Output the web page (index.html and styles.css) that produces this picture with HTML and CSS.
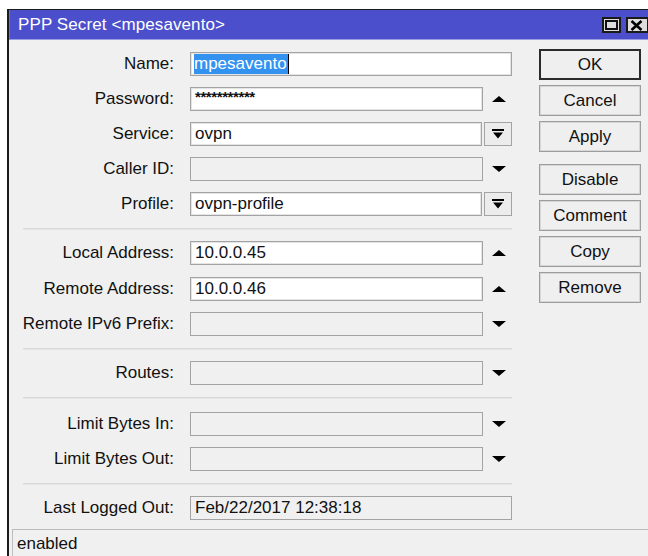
FILE: index.html
```html
<!DOCTYPE html>
<html lang="en">
<head>
<meta charset="utf-8">
<title>PPP Secret</title>
<link rel="stylesheet" href="styles.css">
</head>
<body>
<div class="window">
  <div class="titlebar">
    <span class="title">PPP Secret &lt;mpesavento&gt;</span>
    <div class="tb-buttons">
      <span class="tb-btn"><span class="max-icon"></span></span>
      <span class="tb-btn close">
        <svg width="13" height="11" viewBox="0 0 13 11"><path d="M1.5 1 L11.5 10 M11.5 1 L1.5 10" stroke="#000" stroke-width="2.6"/></svg>
      </span>
    </div>
  </div>

  <div class="body">
    <div class="form">
      <div class="group tight">
        <div class="row">
          <label>Name:</label>
          <div class="ctl"><div class="field"><span class="sel">mpesavento</span><span class="caret"></span></div></div>
        </div>
        <div class="row">
          <label>Password:</label>
          <div class="ctl"><div class="field"><span class="stars">***********</span></div><span class="arrow"><svg width="14" height="6" viewBox="0 0 14 6"><polygon points="0,6 14,6 7,0"/></svg></span></div>
        </div>
        <div class="row">
          <label>Service:</label>
          <div class="ctl"><div class="field">ovpn</div><span class="drop"><svg width="12" height="10" viewBox="0 0 12 10"><rect x="0" y="0" width="12" height="2"/><polygon points="1,3.5 11,3.5 6,9.5"/></svg></span></div>
        </div>
        <div class="row">
          <label>Caller ID:</label>
          <div class="ctl"><div class="field off"></div><span class="arrow"><svg width="14" height="6" viewBox="0 0 14 6"><polygon points="0,0 14,0 7,6"/></svg></span></div>
        </div>
        <div class="row">
          <label>Profile:</label>
          <div class="ctl"><div class="field">ovpn-profile</div><span class="drop"><svg width="12" height="10" viewBox="0 0 12 10"><rect x="0" y="0" width="12" height="2"/><polygon points="1,3.5 11,3.5 6,9.5"/></svg></span></div>
        </div>
      </div>

      <hr class="sep">

      <div class="group">
        <div class="row">
          <label>Local Address:</label>
          <div class="ctl"><div class="field">10.0.0.45</div><span class="arrow"><svg width="14" height="6" viewBox="0 0 14 6"><polygon points="0,6 14,6 7,0"/></svg></span></div>
        </div>
        <div class="row">
          <label>Remote Address:</label>
          <div class="ctl"><div class="field">10.0.0.46</div><span class="arrow"><svg width="14" height="6" viewBox="0 0 14 6"><polygon points="0,6 14,6 7,0"/></svg></span></div>
        </div>
        <div class="row">
          <label>Remote IPv6 Prefix:</label>
          <div class="ctl"><div class="field off"></div><span class="arrow"><svg width="14" height="6" viewBox="0 0 14 6"><polygon points="0,0 14,0 7,6"/></svg></span></div>
        </div>
      </div>

      <hr class="sep">

      <div class="group">
        <div class="row">
          <label>Routes:</label>
          <div class="ctl"><div class="field off"></div><span class="arrow"><svg width="14" height="6" viewBox="0 0 14 6"><polygon points="0,0 14,0 7,6"/></svg></span></div>
        </div>
      </div>

      <hr class="sep loose">

      <div class="group">
        <div class="row">
          <label>Limit Bytes In:</label>
          <div class="ctl"><div class="field off"></div><span class="arrow"><svg width="14" height="6" viewBox="0 0 14 6"><polygon points="0,0 14,0 7,6"/></svg></span></div>
        </div>
        <div class="row">
          <label>Limit Bytes Out:</label>
          <div class="ctl"><div class="field off"></div><span class="arrow"><svg width="14" height="6" viewBox="0 0 14 6"><polygon points="0,0 14,0 7,6"/></svg></span></div>
        </div>
      </div>

      <hr class="sep">

      <div class="group">
        <div class="row">
          <label>Last Logged Out:</label>
          <div class="ctl"><div class="field off">Feb/22/2017 12:38:18</div></div>
        </div>
      </div>
    </div>

    <div class="actions">
      <button class="btn default">OK</button>
      <button class="btn">Cancel</button>
      <button class="btn">Apply</button>
      <button class="btn gap">Disable</button>
      <button class="btn">Comment</button>
      <button class="btn">Copy</button>
      <button class="btn">Remove</button>
    </div>
  </div>

  <div class="status">enabled</div>
</div>
</body>
</html>
```

FILE: styles.css
```css
html, body {
  margin: 0;
  padding: 0;
  background: #ffffff;
  overflow: hidden;
  height: 556px;
}

body {
  font-family: "Liberation Sans", Arial, sans-serif;
  font-size: 17px;
  color: #111;
}

/* window frame */
.window {
  margin: 9px 0 0 7px;
  width: 643px;
  height: 547px;
  border-left: 2px solid #1c1c1c;
  border-top: 1px solid #1c1c1c;
  background: #f0f0f0;
  box-sizing: border-box;
  display: flex;
  flex-direction: column;
}

.titlebar {
  height: 30px;
  background: #4b4fcc;
  border-left: 1px solid #6a6ed6;
  border-bottom: 1px solid #9a9de2;
  box-sizing: border-box;
  display: flex;
  align-items: center;
  justify-content: space-between;
  padding: 0 1px 0 8px;
  flex: none;
}

.title {
  color: #ffffff;
  font-size: 17px;
  letter-spacing: 0.1px;
}

.tb-buttons {
  display: flex;
  gap: 5px;
  align-self: flex-start;
  margin-top: 7px;
}

.tb-btn {
  width: 19px;
  height: 16px;
  box-sizing: border-box;
  border: 2px solid #1a1a1a;
  background: #dedede;
  display: flex;
  align-items: center;
  justify-content: center;
}

.tb-btn.close {
  width: 23px;
  justify-content: flex-start;
  padding-left: 2px;
}

.max-icon {
  width: 13px;
  height: 10px;
  box-sizing: border-box;
  border: 2px solid #111;
}

/* form area */
.body {
  display: flex;
  align-items: flex-start;
  padding-top: 9px;
  flex: none;
}

.form {
  display: flex;
  flex-direction: column;
  padding-top: 3px;
}

.group {
  display: flex;
  flex-direction: column;
  gap: 11.5px;
}

.group.tight {
  gap: 11px;
}

.row {
  display: grid;
  grid-template-columns: 165px 322px;
  column-gap: 16px;
  align-items: center;
}

.row label {
  text-align: right;
  white-space: nowrap;
  line-height: 24px;
}

.ctl {
  display: flex;
  align-items: center;
  height: 24px;
}

.field {
  flex: 1;
  height: 24px;
  box-sizing: border-box;
  border: 1px solid #a3a3a3;
  box-shadow: inset 0 0 0 1px #e4e4e4;
  background: #ffffff;
  padding: 0 4px;
  line-height: 22px;
  white-space: nowrap;
  overflow: hidden;
  display: flex;
  align-items: center;
}

.field.off {
  background: #f0f0f0;
  box-shadow: none;
}

.sel {
  background: #3391f0;
  color: #ffffff;
  line-height: 20px;
  padding: 0 1px 0 0;
  margin-left: -1px;
}

.caret {
  width: 1px;
  height: 20px;
  background: #000;
}

.stars {
  font-size: 15px;
  line-height: 15px;
  align-self: flex-start;
  margin-top: 1px;
  font-weight: bold;
  letter-spacing: -0.4px;
}

.arrow {
  width: 29px;
  flex: none;
  display: flex;
  justify-content: center;
  padding-left: 2px;
  box-sizing: border-box;
}

.arrow svg, .drop svg {
  display: block;
  fill: #000;
}

.drop {
  width: 28px;
  height: 24px;
  margin-left: 2px;
  flex: none;
  box-sizing: border-box;
  border: 1px solid #a3a3a3;
  background: #ececec;
  display: flex;
  align-items: center;
  justify-content: center;
}

.sep {
  margin: 11.5px 0 11.5px 14px;
  height: 2px;
  border: none;
  border-top: 1px solid #d8d8d8;
  border-bottom: 1px solid #e6e6e6;
  box-sizing: border-box;
}

.sep.loose {
  margin-bottom: 13px;
}

/* action buttons */
.actions {
  display: flex;
  flex-direction: column;
  gap: 5px;
  margin-left: 27px;
  width: 102px;
}

.btn {
  height: 31px;
  box-sizing: border-box;
  border: 1px solid #9c9c9c;
  box-shadow: inset 0 0 0 1px #d6d6d6;
  background: #efefef;
  font-family: "Liberation Sans", Arial, sans-serif;
  font-size: 17px;
  color: #111;
  padding: 0;
}

.btn.default {
  border: 2px solid #2a2a2a;
  box-shadow: none;
}

.btn.gap {
  margin-top: 7px;
}

/* status line */
.status {
  margin: 9px 0 0 3px;
  flex: 1;
  border-top: 1px solid #bdbdbd;
  border-left: 1px solid #bdbdbd;
  padding: 3px 0 0 4px;
  line-height: 22px;
}
```
